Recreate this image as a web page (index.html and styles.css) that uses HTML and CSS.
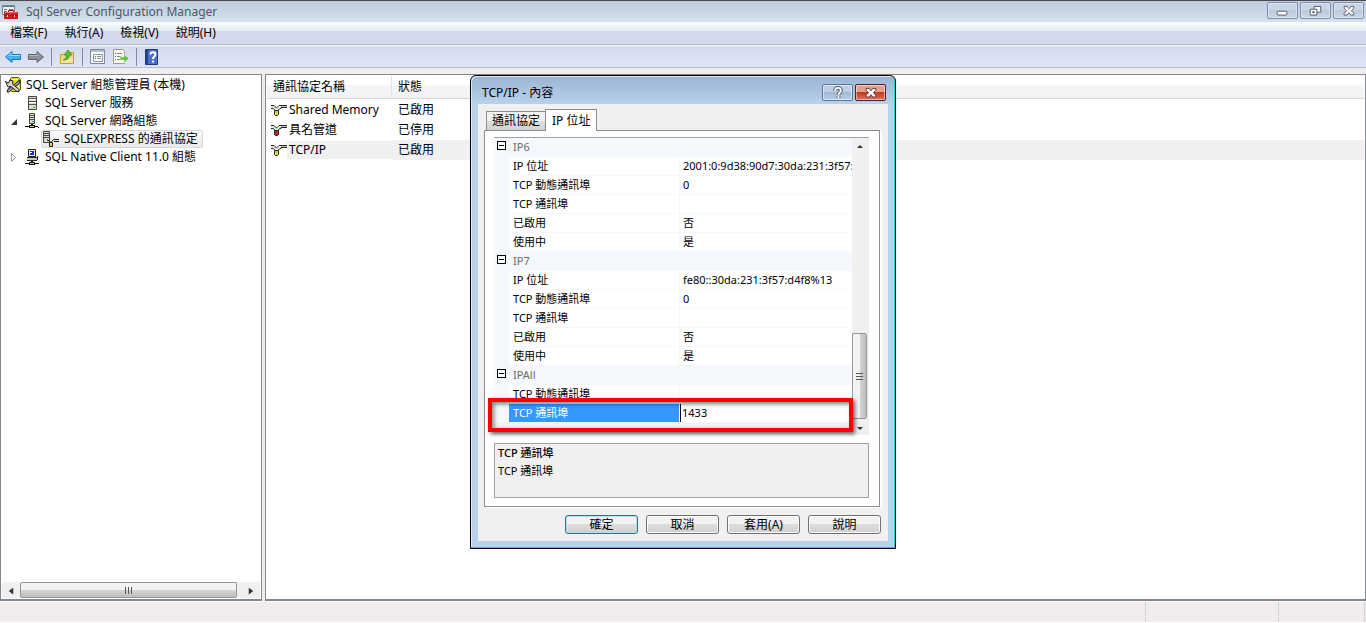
FILE: index.html
```html
<!DOCTYPE html>
<html lang="zh-Hant">
    <head>
        <meta charset="UTF-8">
        <title>Sql Server Configuration Manager</title>
        <meta name="viewport" content="width=device-width, initial-scale=1">
        <link rel="stylesheet" href="styles.css">
    </head>
    <body>
        <svg class="defs" width="0" height="0" aria-hidden="true">
            <symbol id="server" viewBox="0 0 16 16">
                <path d="M4.500 1.500h8v13h-8z" fill="#d9dad2" stroke="#45463f"/>
                <path d="M5 3.500h7M5 6.500h7M5 9.500h7" stroke="#55564f"/>
                <path d="M5 4.500h7M5 7.500h7" stroke="#fff"/>
                <path d="M9 12h2v1H9z" fill="#18b818"/>
            </symbol>
            <symbol id="servernet" viewBox="0 0 16 16">
                <path d="M5.500 .5h5v10h-5z" fill="#d9dad2" stroke="#45463f"/>
                <path d="M6 2.500h4M6 4.500h4M6 6.500h4" stroke="#55564f"/>
                <path d="M8 8h2v1H8z" fill="#18b818"/>
                <path d="M1 13.500h4M10 13.500h4" stroke="#111"/>
                <path d="M7 11h2v1h2v3H5v-3h2z" fill="#111"/>
                <path d="M6 13h4v1H6z" fill="#e8d020"/>
                <path d="M14 14h1v1h-1z" fill="#111"/>
            </symbol>
            <symbol id="serverplug" viewBox="0 0 16 16">
                <path d="M.5 .5h6v11h-6z" fill="#d9dad2" stroke="#45463f"/>
                <path d="M1 2.500h5M1 4.500h5M1 6.500h5" stroke="#45463f"/>
                <path d="M4 9h2v1H4z" fill="#18b818"/>
                <path d="M4 8.500l4 3 2.500-3H16M11 10.500h5" fill="none" stroke="#222"/>
                <path d="M11 9.500h5" stroke="#ddd"/>
                <path d="M6.500 11.500h3v4h-3z" fill="#e6d63a" stroke="#222"/>
            </symbol>
            <symbol id="client" viewBox="0 0 16 16">
                <path d="M4.500 .5h7v7h-7z" fill="#e8e6da" stroke="#222"/>
                <path d="M6 2h4v4H6z" fill="#1830d0"/>
                <path d="M6 3h2v1H6z" fill="#fff"/>
                <path d="M3 9h10v2H3z" fill="#c9c8bc"/>
                <path d="M3 8.500h10M3 11.500h10M13.500 7v4" stroke="#222"/>
                <path d="M1 14.500h4M11 14.500h4" stroke="#111"/>
                <path d="M7 12h2v1h2v3H5v-3h2z" fill="#111"/>
                <path d="M6 14h4v1H6z" fill="#e8d020"/>
            </symbol>
            <symbol id="plug" viewBox="0 0 16 16">
                <path d="M0 3.500h3L5.500 6 8 3.500h8M0 6.500h2l3 2.500M6 9l3-2.500h1v-1h6" fill="none" stroke="#222"/>
                <path d="M10 4.500h6M0 5h3l2 2 3-2" fill="none" stroke="#c8c8c0"/>
                <path d="M3.500 8.500h4v4l-1 1h-2l-1-1z" fill="currentColor" stroke="#222"/>
            </symbol>
        </svg>
        <div class="window">
            <header class="titlebar">
                <svg class="icon" viewBox="0 0 16 16">
                    <path d="M.5 1.500h12v9H.5z" fill="#eef1f3" stroke="#7f868c"/>
                    <path d="M1 2.500h11M2 5.500h3M2 7.500h3M7 5.500h4" stroke="#6d747a"/>
                    <path d="M6.500 8V6.500h5V8" fill="none" stroke="#8c1f1a"/>
                    <path d="M2 8h14v7H2z" fill="#c3211d"/>
                    <path d="M2 11.500h14" stroke="#8b1916"/>
                    <path d="M5 11h1v2H5zM12 11h1v2h-1z" fill="#f3d7d0"/>
                    <path d="M3 8.500h12" stroke="#e57368"/>
                </svg>
                <h1>Sql Server Configuration Manager</h1>
                <div class="winbtns">
                    <button aria-label="最小化"><svg viewBox="0 0 30 16"><rect x="9.500" y="8.500" width="10" height="4" rx="1" fill="#fff" stroke="#555969"/></svg></button>
                    <button aria-label="還原"><svg viewBox="0 0 30 16"><path d="M13.500 3.500h7v6h-7z" fill="#fff" stroke="#555969"/><path d="M9.500 6.500h7v6h-7z" fill="#fff" stroke="#555969"/><path d="M12 9h2v1h-2z" fill="#fff" stroke="#555969"/></svg></button>
                    <button aria-label="關閉"><svg viewBox="0 0 30 16"><path d="M10.500 3.500h3L15.500 6l2-2.500h3v2L18 8l2.500 2.500v2h-3l-2-2.500-2 2.500h-3v-2L13 8l-2.500-2.500z" fill="#fff" stroke="#555969"/></svg></button>
                </div>
            </header>
            <nav class="menubar">
                <a href="#">檔案(F)</a>
                <a href="#">執行(A)</a>
                <a href="#">檢視(V)</a>
                <a href="#">說明(H)</a>
            </nav>
            <div class="toolbar">
                <button aria-label="上一頁"><svg class="icon" viewBox="0 0 16 16"><path d="M.5 8L7 2.500v3h8.500v5H7v3z" fill="#3fb2ee" stroke="#1978b8"/><path d="M2.500 7.500L6 4.500v2h9" fill="none" stroke="#a5e0fb"/></svg></button>
                <button aria-label="下一頁"><svg class="icon" viewBox="0 0 16 16"><path d="M15.500 8L9 2.500v3H.5v5H9v3z" fill="#8d9094" stroke="#5f6368"/><path d="M1 6.500h9v-2" fill="none" stroke="#b4b7ba"/></svg></button>
                <span class="sep"></span>
                <button aria-label="上移一層"><svg class="icon" viewBox="0 0 16 16"><path d="M1.500 5.500h6l1-2h6v11h-13z" fill="#f3d57b" stroke="#c49b35"/><path d="M2 9h12v5H2z" fill="#f8e4a0"/><path d="M4 11c3-1 3.500-3 3.500-5H5l4-5 4 5h-2.500c0 3-2 5-6.500 5z" fill="#58bf37" stroke="#2f8c1e" stroke-width=".7"/></svg></button>
                <span class="sep"></span>
                <button aria-label="內容"><svg class="icon" viewBox="0 0 16 16"><path d="M.5 .5h14v14H.5z" fill="#f8f9fb" stroke="#7f8a98"/><path d="M1 2h13" stroke="#b3bdca" stroke-width="2"/><path d="M3.500 5.500h9v7h-9z" fill="#fff" stroke="#8d97a4"/><path d="M5 7.500h1M5 9.500h1" stroke="#397dc1"/><path d="M7 7.500h4M7 9.500h4" stroke="#878c94"/></svg></button>
                <button aria-label="匯出清單"><svg class="icon" viewBox="0 0 16 16"><path d="M.5 .5h9l2 2v12H.5z" fill="#fdfbef" stroke="#9b9a83"/><path d="M2 4.500h1M2 7.500h1M2 10.500h1" stroke="#397dc1"/><path d="M4 4.500h5M4 7.500h4M4 10.500h3" stroke="#87887b"/><path d="M7 8h4V5l5 4.500-5 4.500v-3H7z" fill="#5fc43c" stroke="#fff" stroke-width=".5"/></svg></button>
                <span class="sep"></span>
                <button aria-label="說明"><svg class="icon" viewBox="0 0 16 16"><path d="M1.500 .5h12v15h-12z" fill="#4a70d0" stroke="#22387f"/><path d="M2 1h2v14H2z" fill="#26418f"/><path d="M6.500 5.500c0-3 5-3 5 0 0 2-2.500 2-2.500 4.500M9 11.500v2" fill="none" stroke="#fff" stroke-width="2"/></svg></button>
            </div>
            <main class="panes">
                <section class="tree">
                    <ul>
                        <li class="root">
                            <svg class="icon" viewBox="0 0 16 16"><path d="M5.500 1.500l1-1h7l2 2v10l-2 2h-7l-2-2z" fill="#e6dc16" stroke="#55520c"/><path d="M7 2.500h6M13.500 3v9" stroke="#fffaa8"/><path d="M13 4l2-1-1 4-3 2-7 6H2l1-3 7-5z" fill="#999" stroke="#222"/><path d="M.5 4.500l3 1.500 1.500-3 3 1-.5 3 6.500 5.500v2h-2L6 9.500l-3 .5z" fill="#d5d5d0" stroke="#222"/></svg>
                            <span>SQL Server 組態管理員 (本機)</span>
                        </li>
                        <li><i class="arrow"></i><svg class="icon"><use href="#server"/></svg><span>SQL Server 服務</span></li>
                        <li><i class="arrow open"></i><svg class="icon"><use href="#servernet"/></svg><span>SQL Server 網路組態</span></li>
                        <li class="sub"><a href="#" class="selected"><svg class="icon"><use href="#serverplug"/></svg><span>SQLEXPRESS 的通訊協定</span></a></li>
                        <li><svg class="arrow" viewBox="0 0 17 18"><path d="M4.500 5.500v8l4-4z" fill="#fff" stroke="#999"/></svg><svg class="icon"><use href="#client"/></svg><span>SQL Native Client 11.0 組態</span></li>
                    </ul>
                    <div class="hscroll">
                        <button aria-label="向左捲動"><svg viewBox="0 0 16 16"><path d="M10 5v6L6 8z" fill="#333"/></svg></button>
                        <div class="hthumb"><i></i><i></i><i></i></div>
                        <button aria-label="向右捲動"><svg viewBox="0 0 16 16"><path d="M6 5v6l4-3z" fill="#333"/></svg></button>
                    </div>
                </section>
                <section class="list">
                    <table>
                        <thead>
                            <tr><th class="c1">通訊協定名稱</th><th class="c2">狀態</th><th></th></tr>
                        </thead>
                        <tbody>
                            <tr><td><div class="name"><svg class="icon yellow"><use href="#plug"/></svg><span>Shared Memory</span></div></td><td>已啟用</td><td></td></tr>
                            <tr><td><div class="name"><svg class="icon red"><use href="#plug"/></svg><span>具名管道</span></div></td><td>已停用</td><td></td></tr>
                            <tr class="active"><td><div class="name"><svg class="icon yellow"><use href="#plug"/></svg><span>TCP/IP</span></div></td><td>已啟用</td><td></td></tr>
                        </tbody>
                    </table>
                </section>
            </main>
            <footer class="statusbar"><span></span><span></span><span></span></footer>
        </div>

        <div class="dialog" role="dialog" aria-labelledby="dlg-title">
            <div class="dlg-title">
                <h2 id="dlg-title">TCP/IP - 內容</h2>
                <button class="help" aria-label="說明"><svg viewBox="0 0 30 16"><path d="M12.500 6c0-4 6-4 6 0 0 2-2.500 2-2.500 4M16 11.500v2" fill="none" stroke="#4c5467" stroke-width="4"/><path d="M12.500 6c0-4 6-4 6 0 0 2-2.500 2-2.500 4M16 11.500v2" fill="none" stroke="#fff" stroke-width="2"/></svg></button>
                <button class="close" aria-label="關閉"><svg viewBox="0 0 30 16"><path d="M10.500 3.500h3L15.500 6l2-2.500h3v2L18 8l2.500 2.500v2h-3l-2-2.500-2 2.500h-3v-2L13 8l-2.500-2.500z" fill="#fff" stroke="#5c3440"/></svg></button>
            </div>
            <div class="dlg-body">
                <div class="tabs">
                    <button class="tab">通訊協定</button>
                    <button class="tab on">IP 位址</button>
                </div>
                <div class="panel">
                    <div class="gridbox">
                        <table class="props">
                            <colgroup><col class="col-gut"><col class="col-name"><col></colgroup>
                            <tr class="group"><td class="gut"><i class="minus"></i></td><th colspan="2">IP6</th></tr>
                            <tr><td class="gut"></td><th>IP 位址</th><td>2001:0:9d38:90d7:30da:231:3f57:d4f8</td></tr>
                            <tr><td class="gut"></td><th>TCP 動態通訊埠</th><td>0</td></tr>
                            <tr><td class="gut"></td><th>TCP 通訊埠</th><td></td></tr>
                            <tr><td class="gut"></td><th>已啟用</th><td>否</td></tr>
                            <tr><td class="gut"></td><th>使用中</th><td>是</td></tr>
                            <tr class="group"><td class="gut"><i class="minus"></i></td><th colspan="2">IP7</th></tr>
                            <tr><td class="gut"></td><th>IP 位址</th><td>fe80::30da:231:3f57:d4f8%13</td></tr>
                            <tr><td class="gut"></td><th>TCP 動態通訊埠</th><td>0</td></tr>
                            <tr><td class="gut"></td><th>TCP 通訊埠</th><td></td></tr>
                            <tr><td class="gut"></td><th>已啟用</th><td>否</td></tr>
                            <tr><td class="gut"></td><th>使用中</th><td>是</td></tr>
                            <tr class="group"><td class="gut"><i class="minus"></i></td><th colspan="2">IPAll</th></tr>
                            <tr><td class="gut"></td><th>TCP 動態通訊埠</th><td></td></tr>
                            <tr class="current"><td class="gut"></td><th><label for="port">TCP 通訊埠</label></th><td><input id="port" type="text" value="1433"></td></tr>
                        </table>
                        <div class="vscroll">
                            <button aria-label="向上捲動"><svg viewBox="0 0 16 16"><path d="M5 10h6L8 7z" fill="#333"/></svg></button>
                            <div class="track"><div class="vthumb"><i></i><i></i><i></i></div></div>
                            <button aria-label="向下捲動"><svg viewBox="0 0 16 16"><path d="M5 8h6l-3 3z" fill="#333"/></svg></button>
                        </div>
                        <div class="mark"></div>
                    </div>
                    <div class="desc">
                        <strong>TCP 通訊埠</strong>
                        <p>TCP 通訊埠</p>
                    </div>
                </div>
                <div class="buttons">
                    <button class="default">確定</button>
                    <button>取消</button>
                    <button>套用(A)</button>
                    <button>說明</button>
                </div>
            </div>
        </div>
    </body>
</html>
```
FILE: styles.css
```css
*{box-sizing: border-box;}
body{
    margin: 0;
    background: #f0eeed;
    color: #000;
    font: 12px/18px "Noto Sans", "Noto Sans CJK TC", sans-serif;
}
h1, h2, p, ul{margin: 0; padding: 0; font-size: 12px; font-weight: normal;}
li{list-style: none;}
a{color: inherit; text-decoration: none;}
button{
    margin: 0;
    padding: 0;
    border: 0;
    background: none;
    font: inherit;
    color: inherit;
}
svg{display: block;}
.defs{position: absolute;}
.icon{width: 16px; height: 16px; flex: none;}

/* main window */
.window{
    display: flex;
    flex-direction: column;
    height: 100vh;
}
.titlebar{
    display: flex;
    align-items: center;
    height: 22px;
    padding: 0 2px;
    border-top: 1px solid #4c4c50;
    background: linear-gradient(#bdcbda, #d5e1ee);
}
.titlebar h1{
    flex: 1;
    padding-left: 8px;
    color: #4c5866;
}
.winbtns{
    display: flex;
    gap: 2px;
    align-self: flex-start;
    padding-top: 1px;
}
.winbtns button{
    width: 31px;
    height: 17px;
    border: 1px solid #8090b0;
    border-radius: 2px;
    background: linear-gradient(#c9d6e5 50%, #b9c9db 50%, #cddbe9);
    box-shadow: inset 0 0 0 1px #d8e3ee;
}
.menubar{
    display: flex;
    gap: 17px;
    height: 23px;
    padding: 2px 10px;
    border-bottom: 1px solid #b2b2b5;
    background: linear-gradient(#fbfdff, #e5ecf6 9px, #d4daed 9px);
}
.toolbar{
    display: flex;
    align-items: center;
    gap: 7px;
    height: 23px;
    padding: 0 5px;
    border-top: 1px solid #fff;
    border-bottom: 1px solid #b2bdcc;
    background: linear-gradient(#d3daed, #dfe5f6);
}
.toolbar .sep{
    width: 1px;
    height: 18px;
    background: #878a96;
}
.panes{
    display: flex;
    flex: 1;
    gap: 3px;
    min-height: 0;
    padding-top: 6px;
}
.tree, .list{
    border: 1px solid #828790;
    border-bottom-width: 2px;
    background: #fff;
}
.tree{
    display: flex;
    flex-direction: column;
    width: 262px;
    padding: 1px;
}
.tree ul{flex: 1;}
.tree li{
    display: flex;
    align-items: center;
    height: 18px;
    padding-left: 5px;
}
.tree li span{padding-left: 5px; white-space: nowrap;}
.tree .root{padding-left: 3px;}
.tree .sub{padding-left: 39px;}
.arrow{width: 17px; height: 18px; flex: none;}
.open::before{
    display: block;
    content: "";
    width: 6px;
    height: 6px;
    margin: 7px 4px;
    background: #333;
    clip-path: polygon(100% 0, 100% 100%, 0 100%);
}
.selected{
    display: flex;
    align-items: center;
    height: 18px;
    padding: 0 4px 0 1px;
    border: 1px solid #d9d9d9;
    border-radius: 2px;
    background: linear-gradient(#fafafa, #e9e9e9);
}
.hscroll{
    display: flex;
    height: 16px;
    background: #f0f0f0;
}
.hscroll button{width: 18px; height: 16px;}
.hscroll button:last-child{margin-left: auto;}
.hthumb{
    display: flex;
    align-items: center;
    justify-content: center;
    gap: 2px;
    width: 217px;
    border: 1px solid #979797;
    border-radius: 2px;
    background: linear-gradient(#f3f3f3 50%, #d6d6d6 50%, #bdbdbd);
}
.hthumb i{width: 1px; height: 7px; background: #555;}
.list{flex: 1; padding: 1px;}
.list table{
    width: 100%;
    border-spacing: 0;
    table-layout: fixed;
}
.list th{
    height: 23px;
    padding: 0 6px;
    border-right: 1px solid #e2e3e5;
    border-bottom: 1px solid #d5d5d5;
    background: linear-gradient(#fff 40%, #f5f6f7 40%, #f1f2f4);
    font-weight: normal;
    text-align: left;
}
.list .c1{width: 125px;}
.list .c2{width: 110px;}
.list th:last-child{border-right: 0;}
.list tbody::before{display: table-row; content: ""; height: 1px;}
.list td{height: 20px; padding: 0 6px;}
.list td:first-child{padding: 0 0 0 4px;}
.name{display: flex; align-items: center;}
.name span{flex: 1; padding-left: 2px;}
.list .active td, .list .active span{background: #f0f0f0;}
.list .active td:first-child{background: none;}
.yellow{color: #d8d848;}
.red{color: #e01818;}
.statusbar{
    display: flex;
    height: 22px;
    border-top: 1px solid #fff;
    border-bottom: 1px solid #fff;
    background: #f0edec;
}
.statusbar span{width: 133px; border-right: 1px solid #d3d3d5;}
.statusbar span:first-child{flex: 1;}
.statusbar span:last-child{width: 86px; margin-right: 1px;}

/* properties dialog, floats over the window */
.dialog{
    position: absolute;
    left: 470px;
    top: 75px;
    width: 426px;
    padding: 0 7px 7px;
    border: 1px solid #000;
    border-radius: 6px 6px 0 0;
    background: linear-gradient(#9ab5d3, #b9d1ea 28px, #b9d1ea);
    box-shadow: inset -1px -1px 0 #2fc9e8, inset 1px 1px 0 #dcebf8;
}
.dlg-title{
    display: flex;
    gap: 2px;
    height: 28px;
    padding: 8px 2px 0 4px;
}
.dlg-title h2{flex: 1;}
.dlg-title button{
    width: 31px;
    height: 17px;
    border: 1px solid #5f7596;
    border-radius: 2px;
    box-shadow: inset 0 0 0 1px rgba(255, 255, 255, .5);
}
.help{background: linear-gradient(#bccfe5 50%, #9fb8d3 50%, #b9d0e8);}
.dlg-title .close{
    border-color: #551b28;
    background: linear-gradient(#e2a08f 50%, #bf3a20 50%, #d6775a);
}
.dlg-body{
    padding: 5px 7px 7px 6px;
    background: #f0f0f0;
    font-size: 11px;
}
.tabs{
    display: flex;
    align-items: flex-end;
    height: 21px;
    padding-left: 2px;
    font-size: 12px;
}
.tab{
    height: 19px;
    padding: 0 5px;
    border: 1px solid #898c95;
    border-bottom: 0;
    border-right: 0;
    background: linear-gradient(#f2f2f2 50%, #dedede 50%, #d2d2d2);
}
.tab.on{
    height: 22px;
    padding: 0 6px;
    margin-bottom: -1px;
    border-right: 1px solid #898c95;
    background: #fff;
    z-index: 1;
}
.panel{
    margin-right: 1px;
    padding: 6px 10px 8px 9px;
    border: 1px solid #898c95;
    box-shadow: 2px 1px 0 #fff;
    background: #fff;
}
.gridbox{
    position: relative;
    display: flex;
    height: 298px;
    border-top: 1px solid #a0a0a0;
    background: #f0f0f0;
}
.props{
    flex: 1;
    align-self: flex-start;
    border-spacing: 0;
    table-layout: fixed;
    background: #fff;
    width: 100%;
    min-width: 0;
}
.col-gut{width: 15px;}
.col-name{width: 171px;}
.props td, .props th{
    height: 19px;
    padding: 0 3px;
    border-bottom: 1px solid #f4f7fc;
    font-weight: normal;
    line-height: 18px;
    text-align: left;
    white-space: nowrap;
    overflow: hidden;
}
.props td:last-child{padding-right: 0;}
.props th{padding-left: 4px; border-right: 1px solid #f4f7fc;}
.props .gut{
    padding: 3px 0 0 3px;
    background: #f4f7fc;
    line-height: 9px;
    vertical-align: top;
}
.props .group th{background: #f4f7fc; color: #6d6d6d;}
.minus{
    display: block;
    width: 9px;
    height: 9px;
    border: 1px solid #000;
    background: linear-gradient(#000, #000) center / 5px 1px no-repeat #fff;
}
.props .current th{background: #3399ff; color: #fff;}
.props .current td:last-child{padding: 0;}
.props input{
    display: block;
    width: 100%;
    height: 18px;
    padding: 0 0 0 1px;
    border: 0;
    border-left: 1px solid #000;
    font: inherit;
}
.vscroll{
    display: flex;
    flex-direction: column;
    flex: none;
    width: 17px;
    background: #f0f0f0;
}
.vscroll button{width: 16px; height: 16px;}
.track{
    display: flex;
    flex: 1;
    flex-direction: column;
    justify-content: flex-end;
    padding-right: 2px;
}
.vthumb{
    display: flex;
    flex-direction: column;
    align-items: center;
    justify-content: center;
    gap: 2px;
    height: 86px;
    border: 1px solid #979797;
    border-radius: 2px;
    background: linear-gradient(90deg, #f3f3f3 50%, #d6d6d6 50%, #bdbdbd);
}
.vthumb i{width: 7px; height: 1px; background: #555;}
.mark{
    position: absolute;
    left: -6px;
    top: 260px;
    width: 365px;
    height: 34px;
    border: 4px solid #fe0000;
    box-shadow: 2px 2px 4px rgba(0, 0, 0, .6), inset 2px 2px 4px rgba(0, 0, 0, .5);
    pointer-events: none;
}
.desc{
    height: 55px;
    margin-top: 8px;
    padding: 0 3px;
    border: 1px solid #a0a0a0;
    background: #f0f0f0;
    line-height: 18px;
}
.desc strong{display: block; font-weight: 500;}
.desc p{font-size: 11px;}
.buttons{
    display: flex;
    justify-content: flex-end;
    gap: 8px;
    padding-top: 8px;
    font-size: 12px;
}
.buttons button{
    width: 73px;
    height: 19px;
    border: 1px solid #707070;
    border-radius: 3px;
    background: linear-gradient(#f2f2f2 50%, #dddddd 50%, #cfcfcf);
    box-shadow: inset 0 0 0 1px #fcfcfc;
    line-height: 16px;
}
.buttons .default{
    border-color: #3c6f7f;
    box-shadow: inset 0 0 0 1px #aee3f2;
}
```
